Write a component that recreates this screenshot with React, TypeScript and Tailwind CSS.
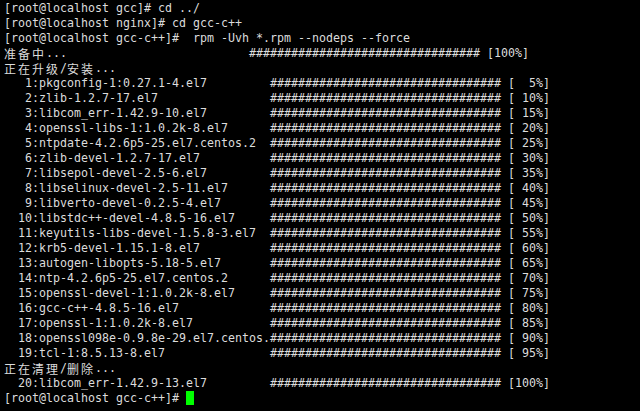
const HASHES = "#".repeat(33);

const items: [string, number][] = [
  ["pkgconfig-1:0.27.1-4.el7", 5],
  ["zlib-1.2.7-17.el7", 10],
  ["libcom_err-1.42.9-10.el7", 15],
  ["openssl-libs-1:1.0.2k-8.el7", 20],
  ["ntpdate-4.2.6p5-25.el7.centos.2", 25],
  ["zlib-devel-1.2.7-17.el7", 30],
  ["libsepol-devel-2.5-6.el7", 35],
  ["libselinux-devel-2.5-11.el7", 40],
  ["libverto-devel-0.2.5-4.el7", 45],
  ["libstdc++-devel-4.8.5-16.el7", 50],
  ["keyutils-libs-devel-1.5.8-3.el7", 55],
  ["krb5-devel-1.15.1-8.el7", 60],
  ["autogen-libopts-5.18-5.el7", 65],
  ["ntp-4.2.6p5-25.el7.centos.2", 70],
  ["openssl-devel-1:1.0.2k-8.el7", 75],
  ["gcc-c++-4.8.5-16.el7", 80],
  ["openssl-1:1.0.2k-8.el7", 85],
  ["openssl098e-0.9.8e-29.el7.centos.2", 90],
  ["tcl-1:8.5.13-8.el7", 95],
];

function itemLine(n: number, name: string, pct: number) {
  const head = (String(n).padStart(4) + ":" + name).slice(0, 38).padEnd(38);
  return head + HASHES + " [" + String(pct).padStart(3) + "%]";
}

// CJK chars take two terminal cells, ascii stays one
function Wide({ text }: { text: string }) {
  return (
    <span className="inline-flex h-[15px] align-top">
      {text.split("").map((c, i) =>
        c.charCodeAt(0) > 0x2e80 ? (
          <span
            key={i}
            className="w-[14px] text-[12px] leading-[15px] font-['Noto_Sans_CJK_SC',sans-serif]"
          >
            {c}
          </span>
        ) : (
          <span key={i} className="w-[7px]">
            {c}
          </span>
        )
      )}
    </span>
  );
}

function Line({ children }: { children?: React.ReactNode }) {
  return <div className="h-[15px] leading-[15px] whitespace-pre">{children}</div>;
}

export default function App() {
  return (
    <main className="w-[640px] h-[411px] overflow-hidden bg-black text-[#dcdcdc] pl-[4px] pt-[1px] text-[11.63px] font-['DejaVu_Sans_Mono','Noto_Sans_CJK_SC',monospace]">
      <Line>[root@localhost gcc]# cd ../</Line>
      <Line>[root@localhost nginx]# cd gcc-c++</Line>
      <Line>[root@localhost gcc-c++]#  rpm -Uvh *.rpm --nodeps --force</Line>
      <Line>
        <Wide text="准备中" />
        {"..." + " ".repeat(26) + HASHES + " [100%]"}
      </Line>
      <Line>
        <Wide text="正在升级/安装" />
        ...
      </Line>
      {items.map(([name, pct], i) => (
        <Line key={name}>{itemLine(i + 1, name, pct)}</Line>
      ))}
      <Line>
        <Wide text="正在清理/删除" />
        ...
      </Line>
      <Line>{itemLine(20, "libcom_err-1.42.9-13.el7", 100)}</Line>
      <Line>
        {"[root@localhost gcc-c++]# "}
        <span className="inline-block w-[8px] h-[14px] align-[-3px] bg-[#00ff00]" />
      </Line>
    </main>
  );
}
